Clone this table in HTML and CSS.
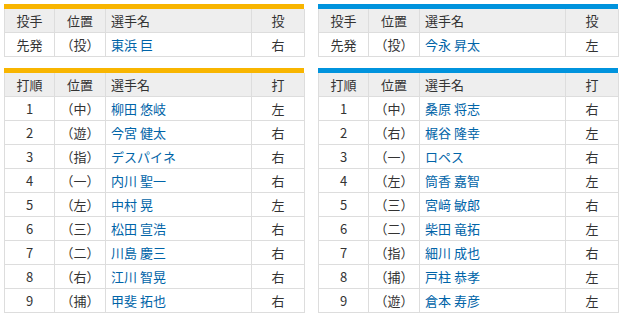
FILE: index.html
```html
<!DOCTYPE html>
<html lang="ja">
<head>
<meta charset="utf-8">
<link rel="stylesheet" href="styles.css">
</head>
<body>
<div class="page">
  <div class="col">
    <div class="team home">
      <table class="tbl">
        <colgroup><col class="c1"><col class="c2"><col class="c3"><col class="c4"></colgroup>
        <thead><tr><th>投手</th><th>位置</th><th class="name">選手名</th><th>投</th></tr></thead>
        <tbody><tr><td>先発</td><td>（投）</td><td class="name"><a>東浜 巨</a></td><td>右</td></tr></tbody>
      </table>
    </div>
    <div class="team home">
      <table class="tbl">
        <colgroup><col class="c1"><col class="c2"><col class="c3"><col class="c4"></colgroup>
        <thead><tr><th>打順</th><th>位置</th><th class="name">選手名</th><th>打</th></tr></thead>
        <tbody>
          <tr><td>1</td><td>（中）</td><td class="name"><a>柳田 悠岐</a></td><td>左</td></tr>
          <tr><td>2</td><td>（遊）</td><td class="name"><a>今宮 健太</a></td><td>右</td></tr>
          <tr><td>3</td><td>（指）</td><td class="name"><a>デスパイネ</a></td><td>右</td></tr>
          <tr><td>4</td><td>（一）</td><td class="name"><a>内川 聖一</a></td><td>右</td></tr>
          <tr><td>5</td><td>（左）</td><td class="name"><a>中村 晃</a></td><td>左</td></tr>
          <tr><td>6</td><td>（三）</td><td class="name"><a>松田 宣浩</a></td><td>右</td></tr>
          <tr><td>7</td><td>（二）</td><td class="name"><a>川島 慶三</a></td><td>右</td></tr>
          <tr><td>8</td><td>（右）</td><td class="name"><a>江川 智晃</a></td><td>右</td></tr>
          <tr><td>9</td><td>（捕）</td><td class="name"><a>甲斐 拓也</a></td><td>右</td></tr>
        </tbody>
      </table>
    </div>
  </div>
  <div class="col">
    <div class="team away">
      <table class="tbl">
        <colgroup><col class="c1"><col class="c2"><col class="c3"><col class="c4"></colgroup>
        <thead><tr><th>投手</th><th>位置</th><th class="name">選手名</th><th>投</th></tr></thead>
        <tbody><tr><td>先発</td><td>（投）</td><td class="name"><a>今永 昇太</a></td><td>左</td></tr></tbody>
      </table>
    </div>
    <div class="team away">
      <table class="tbl">
        <colgroup><col class="c1"><col class="c2"><col class="c3"><col class="c4"></colgroup>
        <thead><tr><th>打順</th><th>位置</th><th class="name">選手名</th><th>打</th></tr></thead>
        <tbody>
          <tr><td>1</td><td>（中）</td><td class="name"><a>桑原 将志</a></td><td>右</td></tr>
          <tr><td>2</td><td>（右）</td><td class="name"><a>梶谷 隆幸</a></td><td>左</td></tr>
          <tr><td>3</td><td>（一）</td><td class="name"><a>ロペス</a></td><td>右</td></tr>
          <tr><td>4</td><td>（左）</td><td class="name"><a>筒香 嘉智</a></td><td>左</td></tr>
          <tr><td>5</td><td>（三）</td><td class="name"><a>宮﨑 敏郎</a></td><td>右</td></tr>
          <tr><td>6</td><td>（二）</td><td class="name"><a>柴田 竜拓</a></td><td>左</td></tr>
          <tr><td>7</td><td>（指）</td><td class="name"><a>細川 成也</a></td><td>右</td></tr>
          <tr><td>8</td><td>（捕）</td><td class="name"><a>戸柱 恭孝</a></td><td>左</td></tr>
          <tr><td>9</td><td>（遊）</td><td class="name"><a>倉本 寿彦</a></td><td>左</td></tr>
        </tbody>
      </table>
    </div>
  </div>
</div>
</body>
</html>
```

FILE: styles.css
```css
html, body {
  margin: 0;
  padding: 0;
  background: #ffffff;
}
body {
  font-family: "Noto Sans CJK JP", "Liberation Sans", sans-serif;
  font-size: 13px;
  color: #333333;
}
.page {
  display: flex;
  gap: 14px;
  padding: 4px 0 0 4px;
}
.col {
  display: flex;
  flex-direction: column;
  gap: 11px;
  width: 300px;
}
.team {
  border-top: 5px solid #f8b500;
}
.team.away {
  border-top-color: #0093dd;
}
.tbl {
  width: 300px;
  border-collapse: collapse;
  table-layout: fixed;
}
.c1 { width: 50px; }
.c2 { width: 51px; }
.c3 { width: 146px; }
.c4 { width: 53px; }
.tbl th,
.tbl td {
  border: 1px solid #dddddd;
  border-top: 0;
  height: 23px;
  padding: 0;
  text-align: center;
  font-weight: normal;
  line-height: 23px;
  white-space: nowrap;
}
.tbl tbody td {
  border-top: 1px solid #dddddd;
}
.tbl th {
  background: #eeeeee;
}
.tbl .name {
  text-align: left;
  padding-left: 5px;
}
.tbl a {
  color: #0064a8;
  text-decoration: none;
}
```
